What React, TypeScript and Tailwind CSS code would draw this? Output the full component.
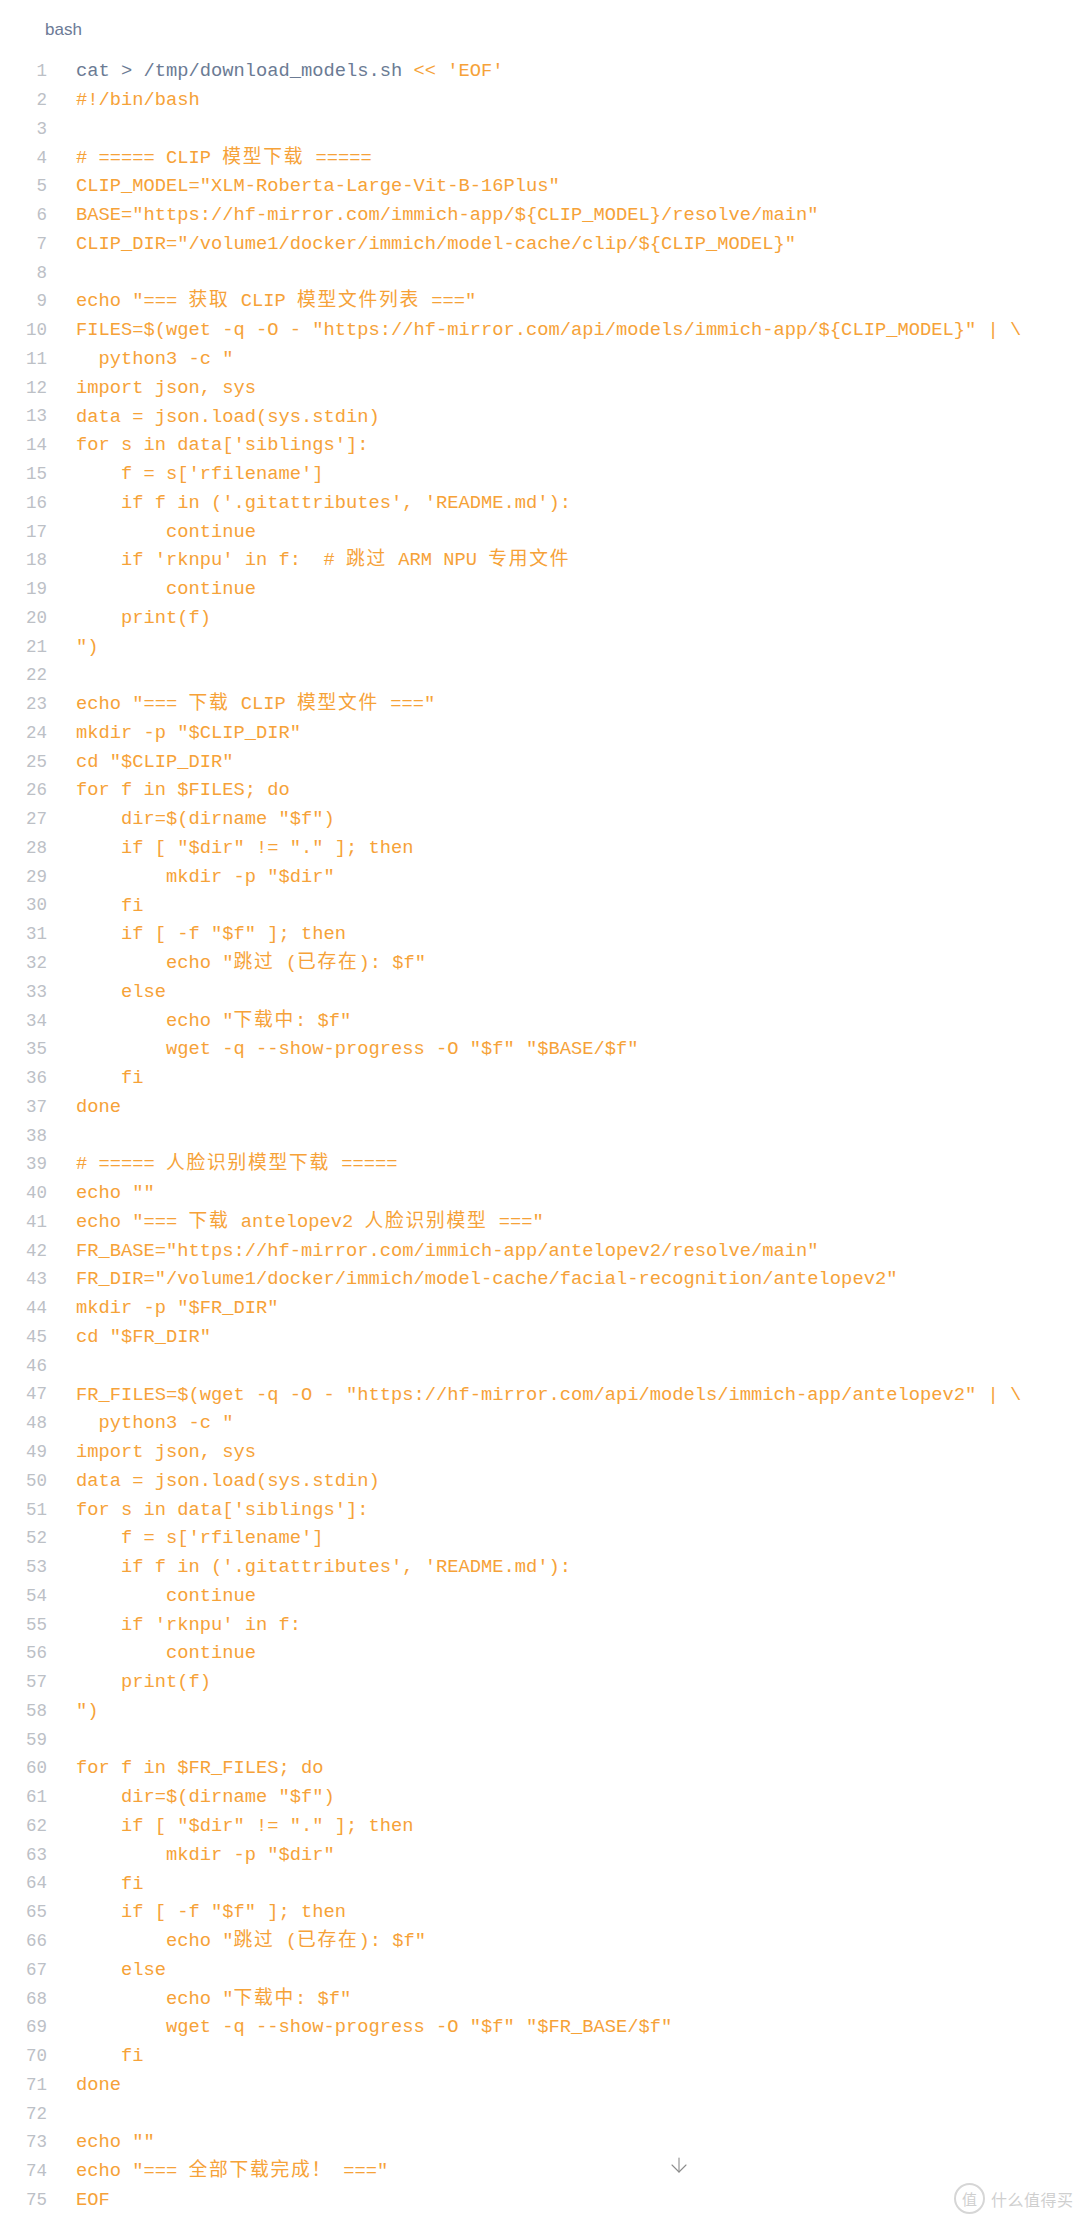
import { ArrowDown } from 'lucide-react';

const lines: string[] = [
  `cat > /tmp/download_models.sh << 'EOF'`,
  `#!/bin/bash`,
  ``,
  `# ===== CLIP 模型下载 =====`,
  `CLIP_MODEL="XLM-Roberta-Large-Vit-B-16Plus"`,
  `BASE="https://hf-mirror.com/immich-app/\${CLIP_MODEL}/resolve/main"`,
  `CLIP_DIR="/volume1/docker/immich/model-cache/clip/\${CLIP_MODEL}"`,
  ``,
  `echo "=== 获取 CLIP 模型文件列表 ==="`,
  `FILES=$(wget -q -O - "https://hf-mirror.com/api/models/immich-app/\${CLIP_MODEL}" | \\`,
  `  python3 -c "`,
  `import json, sys`,
  `data = json.load(sys.stdin)`,
  `for s in data['siblings']:`,
  `    f = s['rfilename']`,
  `    if f in ('.gitattributes', 'README.md'):`,
  `        continue`,
  `    if 'rknpu' in f:  # 跳过 ARM NPU 专用文件`,
  `        continue`,
  `    print(f)`,
  `")`,
  ``,
  `echo "=== 下载 CLIP 模型文件 ==="`,
  `mkdir -p "$CLIP_DIR"`,
  `cd "$CLIP_DIR"`,
  `for f in $FILES; do`,
  `    dir=$(dirname "$f")`,
  `    if [ "$dir" != "." ]; then`,
  `        mkdir -p "$dir"`,
  `    fi`,
  `    if [ -f "$f" ]; then`,
  `        echo "跳过 (已存在): $f"`,
  `    else`,
  `        echo "下载中: $f"`,
  `        wget -q --show-progress -O "$f" "$BASE/$f"`,
  `    fi`,
  `done`,
  ``,
  `# ===== 人脸识别模型下载 =====`,
  `echo ""`,
  `echo "=== 下载 antelopev2 人脸识别模型 ==="`,
  `FR_BASE="https://hf-mirror.com/immich-app/antelopev2/resolve/main"`,
  `FR_DIR="/volume1/docker/immich/model-cache/facial-recognition/antelopev2"`,
  `mkdir -p "$FR_DIR"`,
  `cd "$FR_DIR"`,
  ``,
  `FR_FILES=$(wget -q -O - "https://hf-mirror.com/api/models/immich-app/antelopev2" | \\`,
  `  python3 -c "`,
  `import json, sys`,
  `data = json.load(sys.stdin)`,
  `for s in data['siblings']:`,
  `    f = s['rfilename']`,
  `    if f in ('.gitattributes', 'README.md'):`,
  `        continue`,
  `    if 'rknpu' in f:`,
  `        continue`,
  `    print(f)`,
  `")`,
  ``,
  `for f in $FR_FILES; do`,
  `    dir=$(dirname "$f")`,
  `    if [ "$dir" != "." ]; then`,
  `        mkdir -p "$dir"`,
  `    fi`,
  `    if [ -f "$f" ]; then`,
  `        echo "跳过 (已存在): $f"`,
  `    else`,
  `        echo "下载中: $f"`,
  `        wget -q --show-progress -O "$f" "$FR_BASE/$f"`,
  `    fi`,
  `done`,
  ``,
  `echo ""`,
  `echo "=== 全部下载完成！ ==="`,
  `EOF`,
];

// CJK runs get a little extra spacing so they take ~2 columns like the original
function renderText(text: string) {
  const parts = text.split(/([\u3000-\u9fff\uff00-\uffef]+)/);
  return parts.map((p, i) =>
    /[\u3000-\u9fff\uff00-\uffef]/.test(p) ? (
      <span key={i} className="tracking-[1.75px]">
        {p}
      </span>
    ) : (
      <span key={i}>{p}</span>
    )
  );
}

function CodeLine({ n, text }: { n: number; text: string }) {
  return (
    <div className="flex h-[28.77px] items-center">
      <span className="w-[47px] shrink-0 text-right text-[17.5px] text-[#bcc0c6]">{n}</span>
      <span className="ml-[29px] whitespace-pre text-[#f6a238]">
        {n === 1 ? (
          <>
            <span className="text-[#6b7b94]">cat &gt; /tmp/download_models.sh</span>
            {` << 'EOF'`}
          </>
        ) : (
          renderText(text)
        )}
      </span>
    </div>
  );
}

export default function App() {
  return (
    <div className="relative h-[2221px] w-[1080px] overflow-hidden bg-white">
      <div className="pl-[45px] pt-[19px] text-[17px] leading-[22px] text-[#6c7a96] font-['Liberation_Sans',Arial,sans-serif]">
        bash
      </div>

      <div className="mt-[16px] text-[18.75px] font-['Liberation_Mono','Noto_Sans_CJK_SC',monospace]">
        {lines.map((t, i) => (
          <CodeLine key={i} n={i + 1} text={t} />
        ))}
      </div>

      {/* scroll hint */}
      <div className="absolute left-[667px] top-[2153px] text-[#8c8c8c]">
        <ArrowDown size={24} strokeWidth={1.1} />
      </div>

      {/* watermark */}
      <div className="absolute left-[954px] top-[2183px] flex items-center gap-[6px] text-[#cfcfcf] font-['Noto_Sans_CJK_SC',sans-serif]">
        <div className="flex h-[31px] w-[31px] items-center justify-center rounded-full border-2 border-[#d6d6d6] text-[15px] leading-none">
          值
        </div>
        <span className="text-[16px] leading-none tracking-[0.5px]">什么值得买</span>
      </div>
    </div>
  );
}
